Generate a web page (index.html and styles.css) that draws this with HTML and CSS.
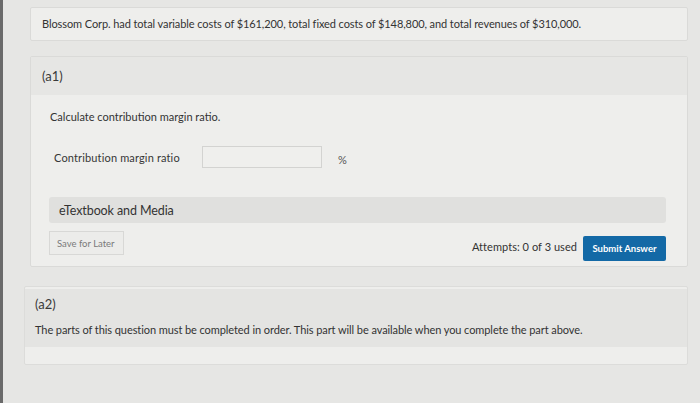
FILE: index.html
```html
<!DOCTYPE html>
<html>
<head>
<meta charset="utf-8">
<link rel="stylesheet" href="styles.css">
</head>
<body>
<div class="page">
  <div class="box intro">
    <p>Blossom Corp. had total variable costs of $161,200, total fixed costs of $148,800, and total revenues of $310,000.</p>
  </div>

  <div class="box part">
    <div class="part-head">(a1)</div>
    <div class="part-body">
      <p class="task">Calculate contribution margin ratio.</p>
      <div class="answer-row">
        <span class="label">Contribution margin ratio</span>
        <span class="input"></span>
        <span class="unit">%</span>
      </div>
      <div class="media">eTextbook and Media</div>
      <div class="actions">
        <span class="btn-save">Save for Later</span>
        <span class="spacer"></span>
        <span class="attempts">Attempts: 0 of 3 used</span>
        <span class="btn-submit">Submit Answer</span>
      </div>
    </div>
  </div>

  <div class="box part2">
    <div class="part2-band">
      <div class="part2-title">(a2)</div>
      <p class="part2-text">The parts of this question must be completed in order. This part will be available when you complete the part above.</p>
    </div>
  </div>
</div>
</body>
</html>
```

FILE: styles.css
```css
html, body {
  margin: 0;
  padding: 0;
}
body {
  background: #e6e6e4;
  font-family: Lato, "Open Sans", sans-serif;
  color: #363636;
  width: 700px;
  height: 403px;
  overflow: hidden;
  border-left: 3px solid #6a6a6a;
  box-sizing: border-box;
}
.page {
  padding-top: 7px;
}
p { margin: 0; }
.box {
  background: #eeeeec;
  border: 1px solid #dadad8;
  border-radius: 2px;
}
.intro {
  margin: 0 12px 0 27px;
  height: 34px;
  box-sizing: border-box;
  display: flex;
  align-items: center;
  padding: 0 0 2px 11px;
  font-size: 11px;
  letter-spacing: -0.09px;
  color: #333;
}
.part {
  margin: 15px 12px 0 27px;
  height: 209px;
}
.part-head {
  height: 38px;
  background: #e6e6e4;
  display: flex;
  align-items: center;
  padding-left: 11px;
  font-size: 13px;
  color: #3a3a3a;
}
.part-body {
  padding: 15px 21px 0 18px;
}
.task {
  font-size: 11px;
  letter-spacing: 0;
  padding-left: 1px;
  color: #333;
}
.answer-row {
  display: flex;
  align-items: center;
  margin-top: 23px;
  height: 22px;
}
.label {
  width: 153px;
  padding-left: 5px;
  box-sizing: border-box;
  font-size: 11px;
  letter-spacing: 0.15px;
}
.input {
  width: 118px;
  height: 20px;
  background: #efefed;
  border: 1px solid #d3d3d1;
}
.unit {
  margin-left: 16px;
  font-size: 11px;
  color: #555;
  margin-top: 4px;
}
.media {
  margin-top: 29px;
  height: 26px;
  background: #e0e0de;
  border-radius: 3px;
  display: flex;
  align-items: center;
  padding-left: 10px;
  font-size: 12.5px;
  letter-spacing: -0.1px;
  color: #333;
}
.actions {
  display: flex;
  align-items: flex-start;
  margin-top: 8px;
}
.btn-save {
  width: 75px;
  height: 24px;
  box-sizing: border-box;
  border: 1px solid #d8d8d6;
  background: #ececea;
  font-size: 9.5px;
  color: #7a7a7a;
  display: flex;
  align-items: center;
  padding-left: 7px;
}
.spacer { flex: 1; }
.attempts {
  font-size: 11px;
  color: #333;
  margin-top: 9px;
  margin-right: 6px;
  letter-spacing: 0.05px;
}
.btn-submit {
  margin-top: 5px;
  width: 83px;
  height: 25px;
  background: #1369a6;
  color: #fff;
  font-size: 9.5px;
  font-weight: bold;
  display: flex;
  align-items: center;
  justify-content: center;
  border-radius: 2px;
}
.part2 {
  margin: 19px 12px 0 21px;
  height: 77px;
  border-color: #dcdcda;
}
.part2-band {
  background: #e4e4e2;
  height: 58px;
  margin-top: 2px;
  padding: 7px 0 0 10px;
  box-sizing: border-box;
}
.part2-title {
  font-size: 13px;
  color: #3a3a3a;
}
.part2-text {
  margin-top: 11px;
  font-size: 11px;
  letter-spacing: -0.08px;
  color: #333;
}
```
